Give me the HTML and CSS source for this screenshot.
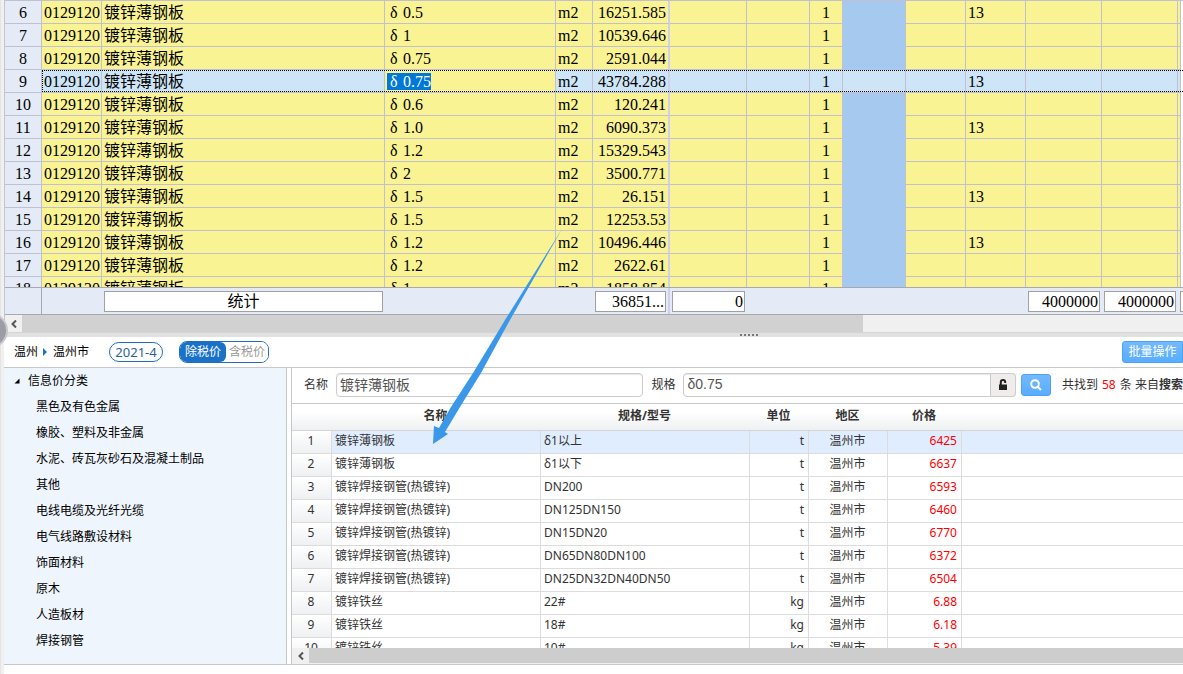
FILE: index.html
```html
<!DOCTYPE html>
<html lang="zh-CN">
<head>
<meta charset="utf-8">
<title>信息价查询</title>
<link rel="stylesheet" href="styles.css">
</head>
<body>
<div class="app">
  <div class="rail"><span class="rail-knob"></span></div>
  <main class="main">
    <section class="materials">
      <div class="sheet-view">
        <table class="sheet">
          <colgroup><col class="w-37"><col class="w-60"><col class="w-283"><col class="w-171"><col class="w-37"><col class="w-77"><col class="w-77"><col class="w-63"><col class="w-33"><col class="w-63"><col class="w-60"><col class="w-60"><col class="w-76"><col class="w-76"><col></colgroup>
          <tbody id="sheet-rows"></tbody>
        </table>
      </div>
      <table class="sheet totals">
        <colgroup><col class="w-37"><col class="w-60"><col class="w-283"><col class="w-171"><col class="w-37"><col class="w-77"><col class="w-77"><col class="w-63"><col class="w-33"><col class="w-63"><col class="w-60"><col class="w-60"><col class="w-76"><col class="w-76"><col></colgroup>
        <tbody><tr><td class="corner"></td><td></td><td><div class="box center">统计</div></td><td></td><td></td><td class="frozen"><div class="box">36851...</div></td><td><div class="box">0</div></td><td></td><td></td><td></td><td></td><td></td><td><div class="box">4000000</div></td><td><div class="box">4000000</div></td><td class="last"><div class="box"></div></td></tr></tbody>
      </table>
      <div class="hscroll">
        <button class="hscroll-btn" aria-label="向左滚动"><svg width="8" height="8" viewBox="0 0 8 8"><path d="M6 0.5 2.5 4 6 7.5" /></svg></button>
        <div class="hscroll-thumb"></div>
      </div>
    </section>
    <div class="splitter"><i></i><i></i><i></i><i></i><i></i></div>
    <header class="toolbar">
      <nav class="crumbs"><span>温州</span><span class="crumb-arrow"></span><span>温州市</span></nav>
      <button class="period">2021-4</button>
      <div class="tax"><button class="tax-on">除税价</button><button class="tax-off">含税价</button></div>
      <button class="batch">批量操作</button>
    </header>
    <section class="lower">
      <aside class="tree">
        <div class="tree-root"><svg width="6" height="6" viewBox="0 0 6 6"><path d="M5.5 0.5V5.5H0.5z"/></svg>信息价分类</div>
        <ul id="tree-items"></ul>
      </aside>
      <div class="prices">
        <form class="search">
          <label for="name">名称</label>
          <input id="name" class="field name-field" value="镀锌薄钢板">
          <label for="spec">规格</label>
          <input id="spec" class="field spec-field" value="δ0.75">
          <button type="button" class="lock" aria-label="锁定"><svg width="10" height="12" viewBox="0 0 10 12"><path class="shackle" d="M2.8 6V3.2a2.2 2.2 0 0 1 4.4 0V4"/><path d="M1 5.5h8V11H1z"/></svg></button>
          <button type="button" class="find" aria-label="搜索"><svg width="14" height="14" viewBox="0 0 14 14"><circle cx="6" cy="6" r="3.8"/><path d="M9 9l3 3"/></svg></button>
          <p class="found">共找到 <em>58</em> 条 来自<b>搜索</b></p>
        </form>
        <div class="price-view">
          <table class="price">
            <colgroup><col class="w-40"><col class="w-209"><col class="w-209"><col class="w-59"><col class="w-79"><col class="w-74"><col></colgroup>
            <thead><tr><th></th><th>名称</th><th>规格/型号</th><th>单位</th><th>地区</th><th>价格</th><th></th></tr></thead>
            <tbody id="price-rows"></tbody>
          </table>
        </div>
        <div class="hscroll lower-scroll">
          <button class="hscroll-btn" aria-label="向左滚动"><svg width="8" height="8" viewBox="0 0 8 8"><path d="M6 0.5 2.5 4 6 7.5" /></svg></button>
          <div class="hscroll-thumb"></div>
        </div>
      </div>
    </section>
    <footer class="status"></footer>
  </main>
  <svg class="pointer" width="132" height="218" viewBox="0 0 132 218"><path d="M129 2 72 93 60 113 40 146 18 180 6 201 1 199 0 217 15 207 12 205 27 180 48 146 66 113 77 93z"/></svg>
</div>
<script src="app.js"></script>
</body>
</html>
```
FILE: styles.css
```css
* { box-sizing: border-box; }
body { margin: 0; font: 12px/16px "Noto Sans", "Noto Sans CJK SC", sans-serif; color: #333; background: #fff; }
button, input { font: inherit; color: inherit; margin: 0; padding: 0; }
.app { position: relative; display: flex; height: 100vh; overflow: hidden; }
.rail { position: relative; flex: 0 0 4px; background: #f0f0f0; border-left: 1px solid #e4e4e4; }
.rail-knob { position: absolute; z-index: 2; left: -28px; top: 313px; width: 35px; height: 35px; border-radius: 50%; border: 2px solid #c8c8cc; background: #9c9ca4; }
.main { flex: 1; min-width: 0; display: flex; flex-direction: column; }
.materials { flex: none; border-left: 1px solid #c4c4cc; }
.sheet-view { height: 287px; overflow: hidden; border-top: 1px solid #c0c0d0; }

.sheet { table-layout: fixed; width: 100%; border-spacing: 0; font: 16px/20px "Liberation Serif", "Noto Sans CJK SC", serif; color: #000; }
.sheet td { height: 23px; padding: 2px 2px 0; border-right: 1px solid #c0c0d0; border-bottom: 1px solid #c0c0d0; background: #faf394; white-space: nowrap; overflow: hidden; line-height: 20px; }
.sheet td:first-child { background: #e4ebf7; text-align: center; }
.sheet td.num { text-align: right; }
.sheet td.factor { text-align: center; }
.sheet td.frozen { border-right: 2px solid #d0d0ec; }
.sheet td.fill { background: #a6c9f0; border-bottom-color: #a6c9f0; }
.delta { display: inline-block; width: 16px; padding-left: 3px; }
.sheet .current { position: relative; }
.sheet .current td:not(:first-child) { background: #cde5f7; }
.sheet .current td.edit { background: #faf394; }
.sheet .current td.fill { border-bottom-color: #c0c0d0; }
.sheet .current::after { content: ""; position: absolute; left: 37px; right: -2px; top: 0; bottom: 1px; border: 1px dotted #000; }
.picked { display: inline-block; height: 17px; line-height: 17px; background: #0078d7; color: #fff; }
.w-33 { width: 33px; } .w-37 { width: 37px; } .w-40 { width: 40px; } .w-59 { width: 59px; } .w-60 { width: 60px; }
.w-63 { width: 63px; } .w-74 { width: 74px; } .w-76 { width: 76px; } .w-77 { width: 77px; } .w-79 { width: 79px; }
.w-171 { width: 171px; } .w-209 { width: 209px; } .w-283 { width: 283px; }

.totals { border-top: 1px solid #a8a8b0; border-bottom: 1px solid #a8a8b0; }
.sheet.totals td { height: 26px; padding: 0 2px; border: 0; background: #e4ebf7; }
.sheet.totals td.corner { border-right: 1px solid #a8a8b0; }
.sheet.totals td.frozen { border-right: 2px solid #d0d0ec; }
.box { height: 21px; padding: 0 1px; border: 1px solid #a0a0a0; background: #fff; line-height: 19px; text-align: right; }
.box.center { text-align: center; }

.hscroll { display: flex; height: 18px; background: #f0f0f0; border-bottom: 1px solid #d4d4d4; }
.hscroll-btn { flex: 0 0 17px; display: flex; align-items: center; justify-content: center; border: 0; background: #f0f0f0; }
.hscroll-btn path { fill: none; stroke: #555; stroke-width: 2; }
.hscroll-thumb { width: 71.4%; background: #d1d1d1; }
.splitter { flex: 0 0 4px; display: flex; justify-content: center; align-items: center; gap: 2px; padding-left: 311px; background: #e1e1e1; }
.splitter i { width: 2px; height: 2px; background: #777; }

.toolbar { flex: 0 0 31px; display: flex; align-items: center; padding-left: 10px; border-bottom: 1px solid #c8c8c8; }
.crumbs { display: flex; align-items: center; color: #000; }
.crumb-arrow { margin: 0 6px 0 5px; border: 4px solid transparent; border-left-color: #1a72c8; border-right: 0; }
.period { width: 54px; height: 20px; margin-left: 20px; border: 1px solid #1f6fc0; border-radius: 10px; background: #fff; color: #2a6496; font-size: 13px; line-height: 16px; }
.tax { display: flex; height: 22px; margin-left: 16px; border: 1px solid #1f6fc0; border-radius: 8px; overflow: hidden; }
.tax button { border: 0; line-height: 18px; }
.tax-on { width: 46px; border-radius: 0 6px 6px 0; background: #1a72c8; color: #fff; }
.tax-off { width: 42px; background: #fff; color: #999; }
.batch { width: 61px; height: 22px; margin-left: auto; border: 1px solid #4ba3f5; border-radius: 3px 0 0 3px; background: linear-gradient(#73b9ff, #59adff); color: #fff; line-height: 18px; }

.lower { flex: 1; min-height: 0; display: flex; border-bottom: 1px solid #c8c8c8; }
.tree { flex: 0 0 283px; background: #eef5fd; border-right: 1px solid #c8c8c8; color: #000; line-height: 26px; }
.tree-root { display: flex; align-items: center; gap: 8px; height: 26px; padding-left: 10px; }
.tree ul { margin: 0; padding: 0 0 0 32px; list-style: none; }
.prices { flex: 1; min-width: 0; display: flex; flex-direction: column; margin-left: 4px; border-left: 1px solid #c8c8c8; }
.search { flex: 0 0 35px; display: flex; align-items: center; padding: 0 0 2px 12px; overflow: hidden; white-space: nowrap; }
.search label { margin-right: 8px; }
.field { height: 24px; padding: 0 3px 2px; border: 1px solid #ccc; border-radius: 4px; box-shadow: inset 0 1px 1px #e8e8e8; font: 14px/20px "Liberation Sans", "Noto Sans CJK SC", sans-serif; color: #555; }
.name-field { width: 308px; margin-right: 8px; }
.spec-field { width: 308px; border-radius: 4px 0 0 4px; }
.lock, .find { flex: none; display: flex; align-items: center; justify-content: center; }
.lock { width: 25px; height: 24px; border: 1px solid #ccc; border-left: 0; border-radius: 0 4px 4px 0; background: #f0ecec; }
.lock path { fill: #222; }
.lock .shackle { fill: none; stroke: #222; stroke-width: 2; }
.find { width: 30px; height: 22px; margin-left: 5px; border: 1px solid #4ba3f5; border-radius: 3px; background: linear-gradient(#73b9ff, #59adff); }
.find svg { fill: none; stroke: #fff; stroke-width: 2; }
.found { margin: 0 0 0 11px; }
.found em { margin: 0 1px; font-style: normal; color: #f00; }

.price-view { flex: 1; min-height: 0; overflow: hidden; border-top: 1px solid #c8c8c8; }
.price { table-layout: fixed; width: 100%; border-spacing: 0; }
.price th { height: 27px; padding: 0 2px 3px 0; border-bottom: 1px solid #d4d4d4; background: linear-gradient(#fff 30%, #eef0f2); line-height: 16px; }
.price td { height: 23px; padding: 0 4px 2px 3px; border-right: 1px solid #dcdcdc; border-bottom: 1px solid #dcdcdc; white-space: nowrap; line-height: 16px; }
.price td:last-child { border-right: 0; }
.price td:first-child { text-align: center; background: linear-gradient(#fff, #eef0f2); }
.price td:nth-child(4) { text-align: right; }
.price td:nth-child(5) { text-align: center; }
.price td:nth-child(6) { text-align: right; color: #f00; }
.price .active td:not(:first-child) { background: #e0edff; }
.lower-scroll { flex: 0 0 16px; border-bottom: 1px solid #f0f0f0; }
.lower-scroll .hscroll-thumb { flex: 1; background: #cdcdcd; }
.status { flex: 0 0 9px; }

.pointer { position: absolute; left: 433px; top: 227px; pointer-events: none; }
.pointer path { fill: #3b97e8; }
```
FILE: app.js
```js
const sheetRows = [
  [6, '0.5', '16251.585', '13'],
  [7, '1', '10539.646', ''],
  [8, '0.75', '2591.044', ''],
  [9, '0.75', '43784.288', '13'],
  [10, '0.6', '120.241', ''],
  [11, '1.0', '6090.373', '13'],
  [12, '1.2', '15329.543', ''],
  [13, '2', '3500.771', ''],
  [14, '1.5', '26.151', '13'],
  [15, '1.5', '12253.53', ''],
  [16, '1.2', '10496.446', '13'],
  [17, '1.2', '2622.61', ''],
  [18, '1', '1858.854', '']
];
document.getElementById('sheet-rows').innerHTML = sheetRows.map(([no, spec, qty, rate]) => {
  const current = no === 9;
  const text = `<span class="delta">δ</span>${spec}`;
  return `<tr class="${current ? 'current' : ''}"><td>${no}</td><td>0129120</td><td>镀锌薄钢板</td>` +
    `<td class="edit">${current ? `<span class="picked">${text}</span>` : text}</td><td>m2</td>` +
    `<td class="num frozen">${qty}</td><td></td><td></td><td class="factor">1</td><td class="fill"></td>` +
    `<td></td><td>${rate}</td><td></td><td></td><td></td></tr>`;
}).join('');

const categories = ['黑色及有色金属', '橡胶、塑料及非金属', '水泥、砖瓦灰砂石及混凝土制品', '其他', '电线电缆及光纤光缆',
  '电气线路敷设材料', '饰面材料', '原木', '人造板材', '焊接钢管'];
document.getElementById('tree-items').innerHTML = categories.map(c => `<li>${c}</li>`).join('');

const priceRows = [
  ['镀锌薄钢板', 'δ1以上', 't', '6425'],
  ['镀锌薄钢板', 'δ1以下', 't', '6637'],
  ['镀锌焊接钢管(热镀锌)', 'DN200', 't', '6593'],
  ['镀锌焊接钢管(热镀锌)', 'DN125DN150', 't', '6460'],
  ['镀锌焊接钢管(热镀锌)', 'DN15DN20', 't', '6770'],
  ['镀锌焊接钢管(热镀锌)', 'DN65DN80DN100', 't', '6372'],
  ['镀锌焊接钢管(热镀锌)', 'DN25DN32DN40DN50', 't', '6504'],
  ['镀锌铁丝', '22#', 'kg', '6.88'],
  ['镀锌铁丝', '18#', 'kg', '6.18'],
  ['镀锌铁丝', '10#', 'kg', '5.39']
];
document.getElementById('price-rows').innerHTML = priceRows.map(([name, spec, unit, price], i) =>
  `<tr class="${i === 0 ? 'active' : ''}"><td>${i + 1}</td><td>${name}</td><td>${spec}</td><td>${unit}</td>` +
  `<td>温州市</td><td>${price}</td><td></td></tr>`).join('');
```
